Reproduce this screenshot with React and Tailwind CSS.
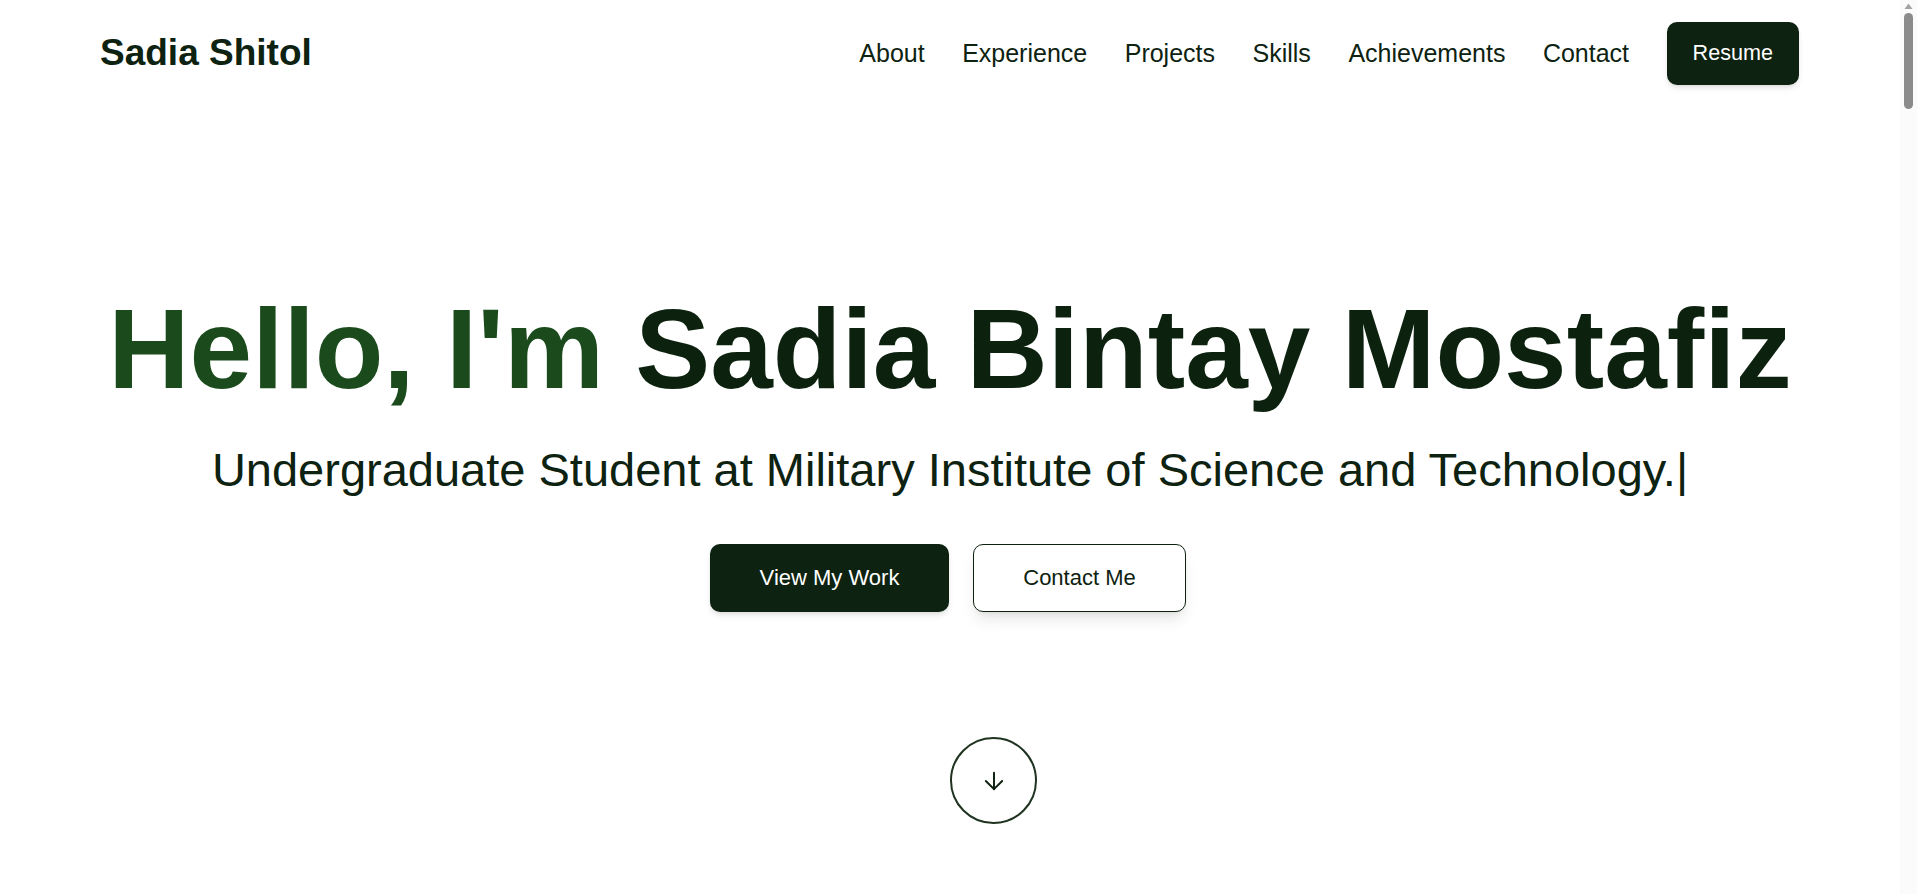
import React from "react";
import { ArrowDown } from "lucide-react";

function FakeScrollbar() {
  return (
    <div aria-hidden="true" className="fixed top-0 right-0 z-[60] w-[17px] h-screen bg-[#fbfbfb] flex flex-col items-center">
      <svg width="9" height="7" viewBox="0 0 9 7" className="mt-[3px]">
        <polygon points="4.5,0.5 8.5,6 0.5,6" fill="#a3a3a3" />
      </svg>
      <div className="mt-[3px] w-[9px] h-[96px] rounded-full bg-[#8b8b8b]"></div>
    </div>
  );
}

export default function App() {
  const links = ["About", "Experience", "Projects", "Skills", "Achievements", "Contact"];
  return (
    <div className="mr-[17px] font-['Liberation_Sans',Arial,sans-serif] bg-white text-[#0d2210]">
      <FakeScrollbar />
      <header className="fixed top-0 left-0 right-[17px] z-50 bg-white">
        <nav className="h-[106px] pl-[100px] pr-[101px] flex items-center justify-between">
          <a href="#" className="text-[37px] leading-[40px] font-bold text-[#0d2210]">
            Sadia Shitol
          </a>
          <div className="flex items-center gap-[37.5px]">
            {links.map((l) => (
              <a key={l} href="#" className="text-[25px] leading-[32px] text-[#0d2210]">
                {l}
              </a>
            ))}
            <a
              href="#"
              className="h-[63px] px-[26px] flex items-center rounded-[10px] bg-[#0d2210] text-white text-[21.6px] shadow-md"
            >
              Resume
            </a>
          </div>
        </nav>
      </header>

      <section className="relative h-screen flex flex-col items-center justify-center">
        <h1 className="text-[112.5px] leading-[1.2] font-bold text-[#0c220f] text-center whitespace-nowrap">
          <span className="text-[#1b4b1c]">Hello, I'm </span>Sadia Bintay Mostafiz
        </h1>
        <p className="mt-[18px] text-[47px] leading-[1.5] text-[#0d2210] text-center whitespace-nowrap">
          Undergraduate Student at Military Institute of Science and Technology.<span>|</span>
        </p>
        <div className="mt-[38px] flex items-center gap-6 -translate-x-[2px]">
          <a
            href="#"
            className="h-[68px] w-[239px] flex items-center justify-center rounded-[10px] bg-[#0d2210] text-white text-[22px] shadow-md"
          >
            View My Work
          </a>
          <a
            href="#"
            className="h-[68px] w-[213px] flex items-center justify-center rounded-[10px] bg-white border border-[#0d2210] text-[#0d2210] text-[22px] shadow-lg"
          >
            Contact Me
          </a>
        </div>
        <a
          href="#about"
          className="absolute left-1/2 bottom-[70px] w-[87px] h-[87px] rounded-full border-2 border-[#1f3320] flex items-center justify-center text-[#0d2210]"
        >
          <ArrowDown size={28} strokeWidth={1.7} />
        </a>
      </section>

      <section id="about" className="min-h-screen"></section>
      <section id="experience" className="min-h-screen"></section>
    </div>
  );
}
